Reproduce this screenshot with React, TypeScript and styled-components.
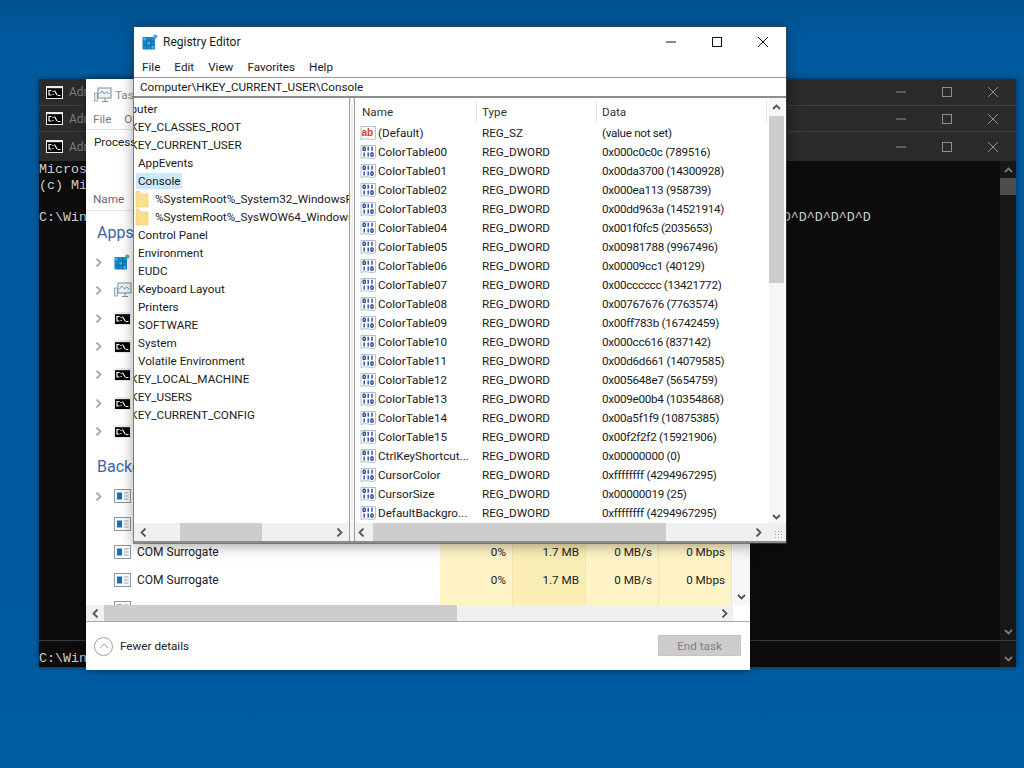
import React from 'react';
import styled, { createGlobalStyle } from 'styled-components';

const Global = createGlobalStyle`
    html, body {
        margin: 0;
        padding: 0;
        width: 1024px;
        height: 768px;
        overflow: hidden;
        background: #005a9f;
    }
    * {
        box-sizing: border-box;
    }
`

const UI_FONT = `Roboto, "Liberation Sans", sans-serif`;

/* ---------- icons ---------- */

const Icon = styled.svg`
    display: block;
    flex: none;
`

const RegeditIcon = ({ size = 16 }: { size?: number }) => (
    <Icon width={size} height={size} viewBox="0 0 16 16">
        <rect x="0.5" y="3" width="12.5" height="12.5" fill="#1888c8" />
        <path d="M0.5 7.2h12.5M0.5 11.3h12.5M4.6 3v12.5M8.8 3v12.5" stroke="#0f6ea8" strokeWidth="0.8" />
        <path d="M1.5 4h2.500v2.500h-2.500zM5.500 8h2.500v2.500h-2.500zM9.500 12h2.500v2.500h-2.500z" fill="#45b4e8" />
        <circle cx="13.3" cy="2.6" r="2.2" fill="#4fb0c9" />
    </Icon>
);

const MonitorIcon = () => (
    <Icon width="18" height="18" viewBox="0 0 18 18">
        <rect x="0.5" y="7" width="3" height="8" fill="#e8e8e8" stroke="#8a8a8a" strokeWidth="0.7" />
        <rect x="4" y="2" width="13" height="10" fill="#eef4f8" stroke="#7f8c96" />
        <path d="M5.500 8l2.500-3 2.500 3 2-2 3 2" fill="none" stroke="#4a9cc8" />
        <path d="M8 15.500h6M11 12v3" stroke="#7f8c96" />
    </Icon>
);

const ConsoleIcon = () => (
    <Icon width="17" height="13" viewBox="0 0 17 13">
        <rect x="0.500" y="0.500" width="16" height="12" fill="#000" stroke="#ececec" />
        <path d="M1 1.500h15" stroke="#ececec" strokeWidth="1.400" />
        <path d="M5.500 4.500h-2.500v4.500h2.500M7 5v1M7 8v1M8.500 4.500l2.500 4.500M11.500 9.500h3" fill="none" stroke="#ffffff" strokeWidth="1.200" />
    </Icon>
);

const ServiceIcon = () => (
    <Icon width="17" height="14" viewBox="0 0 17 14">
        <rect x="0.500" y="0.500" width="16" height="13" fill="#fafafa" stroke="#8b98a5" />
        <rect x="3" y="3.500" width="5" height="7" fill="#1a6fc0" />
        <path d="M10 4h4.500M10 7h4.500M10 10h4.500" stroke="#9aa5b0" />
    </Icon>
);

const FolderIcon = () => (
    <Icon width="16" height="18" viewBox="0 0 16 18">
        <path d="M3 1h3l1.500 3H15v13H3z" fill="#fbdf8a" stroke="#ecc96a" strokeWidth="0.6" />
    </Icon>
);

const Sheet = () => (
    <path d="M1 1.500h14.500v12.200c-4 2.600-9.500-1.800-14.500 1z" fill="#fdfdfd" stroke="#9fb0c4" strokeWidth="0.8" />
);

const StringIcon = () => (
    <Icon width="17" height="16" viewBox="0 0 17 16">
        <Sheet />
        <text x="1.500" y="10.500" fontFamily="Liberation Sans, sans-serif" fontWeight="700" fontSize="10" fill="#c8432f">ab</text>
    </Icon>
);

const BinaryIcon = () => (
    <Icon width="17" height="16" viewBox="0 0 17 16">
        <Sheet />
        <g fill="none" stroke="#27479b" strokeWidth="1.400">
            <ellipse cx="4.200" cy="4.800" rx="1.200" ry="1.800" />
            <path d="M8.200 2.800v4M12 2.800v4M4.200 8.500v4M8.200 8.500v4" />
            <ellipse cx="12" cy="10.500" rx="1.200" ry="1.800" />
        </g>
    </Icon>
);

type Dir = 'up' | 'down' | 'left' | 'right';

const ARROW_PATH: Record<Dir, string> = {
    up: 'M1 6l3.500-3.500 3.500 3.500',
    down: 'M1 3l3.500 3.500 3.500-3.500',
    left: 'M6.500 0.500L2.500 4.500l4 4',
    right: 'M2.500 0.500l4 4-4 4',
};

const ScrollArrow = ({ dir, color = '#555' }: { dir: Dir; color?: string }) => (
    <Icon width="9" height="9" viewBox="0 0 9 9">
        <path d={ARROW_PATH[dir]} fill="none" stroke={color} strokeWidth="1.800" />
    </Icon>
);

const Caption = ({ color }: { color: string }) => (
    <>
        <CaptionButton>
            <Icon width="12" height="12" viewBox="0 0 12 12">
                <path d="M1 6h10" stroke={color} />
            </Icon>
        </CaptionButton>
        <CaptionButton>
            <Icon width="12" height="12" viewBox="0 0 12 12">
                <rect x="1.500" y="1.500" width="9" height="9" fill="none" stroke={color} />
            </Icon>
        </CaptionButton>
        <CaptionButton>
            <Icon width="12" height="12" viewBox="0 0 12 12">
                <path d="M1 1l10 10M11 1L1 11" stroke={color} />
            </Icon>
        </CaptionButton>
    </>
);

/* ---------- data ---------- */

const TREE: { label: string; indent: number; selected?: boolean }[] = [
    { label: 'Computer', indent: -50 },
    { label: 'HKEY_CLASSES_ROOT', indent: -34 },
    { label: 'HKEY_CURRENT_USER', indent: -34 },
    { label: 'AppEvents', indent: -18 },
    { label: 'Console', indent: -18, selected: true },
    { label: '%SystemRoot%_System32_WindowsPowerShell_v1.0_powershell.exe', indent: -1 },
    { label: '%SystemRoot%_SysWOW64_WindowsPowerShell_v1.0_powershell.exe', indent: -1 },
    { label: 'Control Panel', indent: -18 },
    { label: 'Environment', indent: -18 },
    { label: 'EUDC', indent: -18 },
    { label: 'Keyboard Layout', indent: -18 },
    { label: 'Printers', indent: -18 },
    { label: 'SOFTWARE', indent: -18 },
    { label: 'System', indent: -18 },
    { label: 'Volatile Environment', indent: -18 },
    { label: 'HKEY_LOCAL_MACHINE', indent: -34 },
    { label: 'HKEY_USERS', indent: -34 },
    { label: 'HKEY_CURRENT_CONFIG', indent: -34 },
];

const VALUES: [string, string, string][] = [
    ['(Default)', 'REG_SZ', '(value not set)'],
    ['ColorTable00', 'REG_DWORD', '0x000c0c0c (789516)'],
    ['ColorTable01', 'REG_DWORD', '0x00da3700 (14300928)'],
    ['ColorTable02', 'REG_DWORD', '0x000ea113 (958739)'],
    ['ColorTable03', 'REG_DWORD', '0x00dd963a (14521914)'],
    ['ColorTable04', 'REG_DWORD', '0x001f0fc5 (2035653)'],
    ['ColorTable05', 'REG_DWORD', '0x00981788 (9967496)'],
    ['ColorTable06', 'REG_DWORD', '0x00009cc1 (40129)'],
    ['ColorTable07', 'REG_DWORD', '0x00cccccc (13421772)'],
    ['ColorTable08', 'REG_DWORD', '0x00767676 (7763574)'],
    ['ColorTable09', 'REG_DWORD', '0x00ff783b (16742459)'],
    ['ColorTable10', 'REG_DWORD', '0x000cc616 (837142)'],
    ['ColorTable11', 'REG_DWORD', '0x00d6d661 (14079585)'],
    ['ColorTable12', 'REG_DWORD', '0x005648e7 (5654759)'],
    ['ColorTable13', 'REG_DWORD', '0x009e00b4 (10354868)'],
    ['ColorTable14', 'REG_DWORD', '0x00a5f1f9 (10875385)'],
    ['ColorTable15', 'REG_DWORD', '0x00f2f2f2 (15921906)'],
    ['CtrlKeyShortcut...', 'REG_DWORD', '0x00000000 (0)'],
    ['CursorColor', 'REG_DWORD', '0xffffffff (4294967295)'],
    ['CursorSize', 'REG_DWORD', '0x00000019 (25)'],
    ['DefaultBackgro...', 'REG_DWORD', '0xffffffff (4294967295)'],
];

// rows under the registry window show nothing but their icon
const APP_ICONS = ['regedit', 'monitor', 'console', 'console', 'console', 'console', 'console'];
const BACKGROUND_ROWS = ['', '', 'COM Surrogate', 'COM Surrogate', ''];

const PROMPT = 'C:\\Windows\\system32>' + '^D'.repeat(42);

/* ---------- app ---------- */

export default function App() {
    return (
        <Desktop>
            <Global />

            <ConsoleWindow>
                {[0, 1, 2].map((i) => (
                    <ConsoleBar key={i}>
                        <ConsoleIcon />
                        <ConsoleTitle>Administrator: Command Prompt</ConsoleTitle>
                        <Caption color="#8f8f8f" />
                    </ConsoleBar>
                ))}
                <ConsolePane $grow>
                    <ConsoleText>
                        {'Microsoft Windows [Version 10.0.19041.1]\n(c) Microsoft Corporation. All rights reserved.\n\n' + PROMPT}
                    </ConsoleText>
                    <ConsoleScroll>
                        <ScrollArrow dir="up" color="#7a7a7a" />
                        <ConsoleThumb />
                        <ConsoleArrowEnd>
                            <ScrollArrow dir="down" color="#7a7a7a" />
                        </ConsoleArrowEnd>
                    </ConsoleScroll>
                </ConsolePane>
                <ConsolePane>
                    <ConsoleText $bottom>{'C:\\Windows\\system32>'}</ConsoleText>
                    <ConsoleScroll>
                        <ConsoleArrowEnd>
                            <ScrollArrow dir="down" color="#7a7a7a" />
                        </ConsoleArrowEnd>
                    </ConsoleScroll>
                </ConsolePane>
            </ConsoleWindow>

            <TaskWindow>
                <TaskTitle>
                    <MonitorIcon />
                    <span>Task Manager</span>
                </TaskTitle>
                <TaskMenu>
                    <span>File</span>
                    <span>Options</span>
                    <span>View</span>
                </TaskMenu>
                <TaskTabs>Processes</TaskTabs>
                <TaskHead>Name</TaskHead>
                <TaskMiddle>
                    <TaskTable>
                        <SectionTitle>Apps (7)</SectionTitle>
                        {APP_ICONS.map((kind, i) => (
                            <TaskRow key={i} $nudge={i === 4}>
                                <NameCell>
                                    <Chevron>
                                        <ScrollArrow dir="right" color="#a8a8a8" />
                                    </Chevron>
                                    <RowIconSlot>
                                        {kind === 'regedit' ? <RegeditIcon /> : kind === 'monitor' ? <MonitorIcon /> : <ConsoleIcon />}
                                    </RowIconSlot>
                                </NameCell>
                                <UsageCells />
                            </TaskRow>
                        ))}
                        <SectionTitle>Background processes</SectionTitle>
                        {BACKGROUND_ROWS.map((name, i) => (
                            <TaskRow key={i}>
                                <NameCell>
                                    <Chevron>{i === 0 && <ScrollArrow dir="right" color="#a8a8a8" />}</Chevron>
                                    <RowIconSlot>
                                        <ServiceIcon />
                                    </RowIconSlot>
                                    <span>{name}</span>
                                </NameCell>
                                <UsageCells filled={name !== ''} />
                            </TaskRow>
                        ))}
                    </TaskTable>
                    <TaskVScroll>
                        <ScrollArrow dir="down" />
                    </TaskVScroll>
                </TaskMiddle>
                <TaskHScroll $height={16} $pad={5}>
                    <ScrollArrow dir="left" />
                    <Thumb $left={4} $width={353} />
                    <RightEnd $inset={4}>
                        <ScrollArrow dir="right" />
                    </RightEnd>
                </TaskHScroll>
                <TaskFooter>
                    <FewerCircle>
                        <Icon width="10" height="6" viewBox="0 0 10 6">
                            <path d="M1 5l4-4 4 4" fill="none" stroke="#a0a0a0" />
                        </Icon>
                    </FewerCircle>
                    <span>Fewer details</span>
                    <EndTask>End task</EndTask>
                </TaskFooter>
            </TaskWindow>

            <RegWindow>
                <RegTitle>
                    <RegeditIcon />
                    <RegName>Registry Editor</RegName>
                    <Caption color="#111" />
                </RegTitle>
                <RegMenu>
                    <span>File</span>
                    <span>Edit</span>
                    <span>View</span>
                    <span>Favorites</span>
                    <span>Help</span>
                </RegMenu>
                <AddressBar>Computer\HKEY_CURRENT_USER\Console</AddressBar>
                <Panes>
                    <TreePane>
                        <TreeList>
                            {TREE.map((node) => (
                                <TreeRow key={node.label} $indent={node.indent}>
                                    <FolderIcon />
                                    <TreeLabel $selected={node.selected}>{node.label}</TreeLabel>
                                </TreeRow>
                            ))}
                        </TreeList>
                        <HScroll $height={18} $pad={5}>
                            <ScrollArrow dir="left" />
                            <Thumb $left={32} $width={82} />
                            <RightEnd $inset={5}>
                                <ScrollArrow dir="right" />
                            </RightEnd>
                        </HScroll>
                    </TreePane>
                    <Splitter />
                    <ListPane>
                        <ListColumn>
                            <ListHead>
                                <HeadCell $w={122} $pad={7}>Name</HeadCell>
                                <HeadCell $w={120} $pad={5}>Type</HeadCell>
                                <HeadCell $w={170} $pad={5}>Data</HeadCell>
                            </ListHead>
                            <ListBody>
                                {VALUES.map(([name, type, data]) => (
                                    <ValueRow key={name}>
                                        <ValueName>
                                            {type === 'REG_SZ' ? <StringIcon /> : <BinaryIcon />}
                                            <span>{name}</span>
                                        </ValueName>
                                        <TypeCell>{type}</TypeCell>
                                        <DataCell>{data}</DataCell>
                                    </ValueRow>
                                ))}
                            </ListBody>
                        </ListColumn>
                        <RegVScroll>
                            <VArrow>
                                <ScrollArrow dir="up" />
                            </VArrow>
                            <VThumb />
                            <VArrowEnd>
                                <ScrollArrow dir="down" />
                            </VArrowEnd>
                        </RegVScroll>
                        <ListHScroll>
                            <ScrollArrow dir="left" />
                            <Thumb $left={7} $width={293} />
                            <RightEnd $inset={11}>
                                <ScrollArrow dir="right" />
                            </RightEnd>
                            <Grip />
                        </ListHScroll>
                    </ListPane>
                </Panes>
            </RegWindow>
        </Desktop>
    );
}

const UsageCells = ({ filled = false }: { filled?: boolean }) => (
    <>
        <UsageCell>{filled && '0%'}</UsageCell>
        <UsageCell $strong>{filled && '1.7 MB'}</UsageCell>
        <UsageCell>{filled && '0 MB/s'}</UsageCell>
        <UsageCell>{filled && '0 Mbps'}</UsageCell>
    </>
);

/* ---------- desktop and windows ---------- */

const Desktop = styled.div`
    position: relative;
    width: 1024px;
    height: 768px;
    overflow: hidden;
    background: linear-gradient(180deg, #00528f 0, #005a9f 40px, #005ca3 100%);
    font-family: ${UI_FONT};
    font-size: 11.7px;
    color: #1a1a1a;
`

const CaptionButton = styled.div`
    width: 46px;
    display: flex;
    justify-content: center;
    align-items: center;
`

/* ---------- console ---------- */

const ConsoleWindow = styled.div`
    position: absolute;
    left: 39px;
    top: 79px;
    width: 977px;
    height: 588px;
    display: flex;
    flex-direction: column;
    background: #0c0c0c;
    box-shadow: 0 0 6px rgba(0, 0, 0, 0.45);
`

const ConsoleBar = styled.div`
    height: 27px;
    flex: none;
    display: flex;
    align-items: center;
    padding: 0 0 0 7px;
    background: #2b2b2b;
    border-bottom: 1px solid #3d3d3d;
    color: #7d7d7d;
    font-size: 12px;

    &:nth-child(2) {
        height: 26px;
    }

    &:nth-child(3) {
        height: 29px;
        border-bottom: none;
    }
`

const ConsoleTitle = styled.span`
    margin-left: 6px;
    margin-right: auto;
`

const ConsolePane = styled.div<{ $grow?: boolean }>`
    flex: ${(p) => (p.$grow ? '1' : 'none')};
    height: ${(p) => (p.$grow ? 'auto' : '26px')};
    display: flex;
    border-bottom: ${(p) => (p.$grow ? '1px solid #3a3a3a' : 'none')};
    min-height: 0;
`

const ConsoleText = styled.pre<{ $bottom?: boolean }>`
    flex: 1;
    margin: 0;
    padding-top: ${(p) => (p.$bottom ? '10px' : '1px')};
    overflow: hidden;
    white-space: pre;
    font-family: "Liberation Mono", monospace;
    font-size: 13.33px;
    line-height: 16px;
    color: #cccccc;
`

const ConsoleScroll = styled.div`
    width: 16px;
    flex: none;
    display: flex;
    flex-direction: column;
    align-items: center;
    padding-top: 5px;
    background: #171717;
`

const ConsoleThumb = styled.div`
    width: 16px;
    height: 17px;
    margin-top: 3px;
    background: #4d4d4d;
`

const ConsoleArrowEnd = styled.div`
    margin-top: auto;
    padding-bottom: 4px;
`

/* ---------- task manager ---------- */

const TaskWindow = styled.div`
    position: absolute;
    left: 86px;
    top: 79px;
    width: 664px;
    height: 591px;
    display: flex;
    flex-direction: column;
    background: #fff;
    box-shadow: 0 0 8px rgba(0, 0, 0, 0.4);
`

const TaskTitle = styled.div`
    height: 31px;
    flex: none;
    display: flex;
    align-items: center;
    gap: 3px;
    padding-left: 8px;
    color: #8c8c8c;
`

const TaskMenu = styled.div`
    height: 20px;
    flex: none;
    display: flex;
    align-items: center;
    gap: 13px;
    padding: 0 7px 2px;
    color: #777;
    border-bottom: 1px solid #e0e0e0;
`

const TaskTabs = styled.div`
    height: 25px;
    flex: none;
    display: flex;
    align-items: center;
    padding: 0 8px 1px;
    color: #222;
`

const TaskHead = styled.div`
    height: 56px;
    flex: none;
    display: flex;
    align-items: flex-end;
    padding: 0 7px 4px;
    color: #666;
    border-bottom: 1px solid #e3e3e3;
`

const TaskMiddle = styled.div`
    flex: 1;
    min-height: 0;
    display: flex;
`

const TaskTable = styled.div`
    flex: 1;
    overflow: hidden;
`

const SectionTitle = styled.div`
    height: 37px;
    padding: 12px 0 0 11px;
    font-size: 16px;
    white-space: nowrap;
    color: #3e66a8;
`

const TaskRow = styled.div<{ $nudge?: boolean }>`
    height: ${(p) => (p.$nudge ? '29px' : '28px')};
    display: grid;
    grid-template-columns: 354px repeat(4, 73px);
`

const NameCell = styled.div`
    display: flex;
    align-items: center;
    color: #222;
    white-space: nowrap;
    font-size: 12px;
`

const Chevron = styled.div`
    width: 24px;
    margin-right: 4px;
    display: flex;
    justify-content: center;
`

const RowIconSlot = styled.div`
    width: 23px;
    display: flex;
    align-items: center;
`

const UsageCell = styled.div<{ $strong?: boolean }>`
    display: flex;
    align-items: center;
    justify-content: flex-end;
    padding-right: 6px;
    background: ${(p) => (p.$strong ? '#fbeeb4' : '#fff4c8')};
    border-right: 1px solid #f3e4a6;
    color: #222;
`

const TaskVScroll = styled.div`
    width: 17px;
    flex: none;
    display: flex;
    flex-direction: column;
    justify-content: flex-end;
    align-items: center;
    padding-bottom: 4px;
    background: #f6f6f6;
`

const TaskFooter = styled.div`
    height: 49px;
    flex: none;
    display: flex;
    align-items: center;
    padding: 0 9px 0 8px;
    border-top: 1px solid #a8a8a8;
    color: #222;
`

const FewerCircle = styled.div`
    width: 19px;
    height: 19px;
    margin-right: 7px;
    display: flex;
    align-items: center;
    justify-content: center;
    border: 1px solid #a0a0a0;
    border-radius: 50%;
`

const EndTask = styled.div`
    width: 83px;
    height: 21px;
    margin-left: auto;
    margin-bottom: 1px;
    display: flex;
    align-items: center;
    justify-content: center;
    background: #cccccc;
    border: 1px solid #c4c4c4;
    color: #7f7f7f;
`

/* ---------- scrollbars ---------- */

const HScroll = styled.div<{ $height: number; $pad: number }>`
    height: ${(p) => p.$height}px;
    flex: none;
    display: flex;
    align-items: center;
    padding-left: ${(p) => p.$pad}px;
    background: #f0f0f0;
`

const TaskHScroll = styled(HScroll)`
    margin-right: 17px;
`

const Thumb = styled.div<{ $left: number; $width: number }>`
    align-self: stretch;
    margin-left: ${(p) => p.$left}px;
    width: ${(p) => p.$width}px;
    background: #cdcdcd;
`

const RightEnd = styled.div<{ $inset: number }>`
    margin-left: auto;
    margin-right: ${(p) => p.$inset}px;
`

/* ---------- registry editor ---------- */

const RegWindow = styled.div`
    position: absolute;
    left: 134px;
    top: 27px;
    width: 652px;
    height: 516px;
    display: flex;
    flex-direction: column;
    background: #fff;
    box-shadow: 0 0 0 1px rgba(70, 70, 70, 0.6), 0 2px 14px rgba(0, 0, 0, 0.4);
`

const RegTitle = styled.div`
    height: 29px;
    flex: none;
    display: flex;
    align-items: center;
    padding-left: 8px;
    padding-top: 1px;
`

const RegName = styled.span`
    margin-left: 5px;
    margin-right: auto;
    font-size: 12px;
`

const RegMenu = styled.div`
    height: 21px;
    flex: none;
    display: flex;
    align-items: center;
    gap: 14px;
    padding-left: 8px;
`

const AddressBar = styled.div`
    height: 21px;
    flex: none;
    display: flex;
    align-items: center;
    padding-left: 6px;
    border-top: 1px solid #9a9a9a;
    border-bottom: 2px solid #8c8c8c;
`

const Panes = styled.div`
    flex: 1;
    min-height: 0;
    display: flex;
    border-bottom: 2px solid #8c8c8c;
`

const TreePane = styled.div`
    width: 216px;
    flex: none;
    display: flex;
    flex-direction: column;
    border-right: 1px solid #a0a0a0;
`

const TreeList = styled.div`
    flex: 1;
    min-height: 0;
    overflow: hidden;
    padding-top: 2px;
`

const TreeRow = styled.div<{ $indent: number }>`
    height: 18px;
    display: flex;
    align-items: center;
    gap: 4px;
    margin-left: ${(p) => p.$indent}px;
    white-space: nowrap;
`

const TreeLabel = styled.span<{ $selected?: boolean }>`
    padding: 1px 2px;
    background: ${(p) => (p.$selected ? '#cce8ff' : 'transparent')};
`

const Splitter = styled.div`
    width: 4px;
    flex: none;
    background: #f4f4f4;
`

const ListPane = styled.div`
    flex: 1;
    min-width: 0;
    display: grid;
    grid-template-columns: 1fr 17px;
    grid-template-rows: 1fr 18px;
    border-left: 1px solid #a0a0a0;
`

const ListColumn = styled.div`
    min-height: 0;
    overflow: hidden;
`

const ListHead = styled.div`
    height: 25px;
    padding-top: 2px;
    display: flex;
    color: #333;
`

const HeadCell = styled.div<{ $w: number; $pad: number }>`
    width: ${(p) => p.$w}px;
    display: flex;
    align-items: center;
    padding-left: ${(p) => p.$pad}px;
    border-right: 1px solid #e5e5e5;
`

const ListBody = styled.div`
    display: flex;
    flex-direction: column;
`

const ValueRow = styled.div`
    height: 19px;
    display: flex;
    align-items: center;
    white-space: nowrap;
`

const ValueName = styled.div`
    width: 122px;
    display: flex;
    align-items: center;
    gap: 1px;
    padding-left: 5px;
`

const TypeCell = styled.div`
    width: 120px;
    padding-left: 5px;
`

const DataCell = styled.div`
    width: 170px;
    padding-left: 5px;
    letter-spacing: -0.3px;
`

const RegVScroll = styled.div`
    display: flex;
    flex-direction: column;
    align-items: center;
    margin-right: 2px;
    background: #f6f6f6;
`

const VArrow = styled.div`
    height: 18px;
    display: flex;
    align-items: center;
`

const VThumb = styled.div`
    width: 100%;
    height: 167px;
    background: #cdcdcd;
`

const VArrowEnd = styled.div`
    margin-top: auto;
    padding-bottom: 2px;
`

const ListHScroll = styled.div`
    grid-column: 1 / 3;
    display: flex;
    align-items: center;
    padding-left: 2px;
    background: #f0f0f0;
`

const Grip = styled.div`
    width: 10px;
    height: 10px;
    margin-right: 2px;
    margin-top: 6px;
    background-image: radial-gradient(#a5a5a5 1px, transparent 1px);
    background-size: 3px 3px;
`
